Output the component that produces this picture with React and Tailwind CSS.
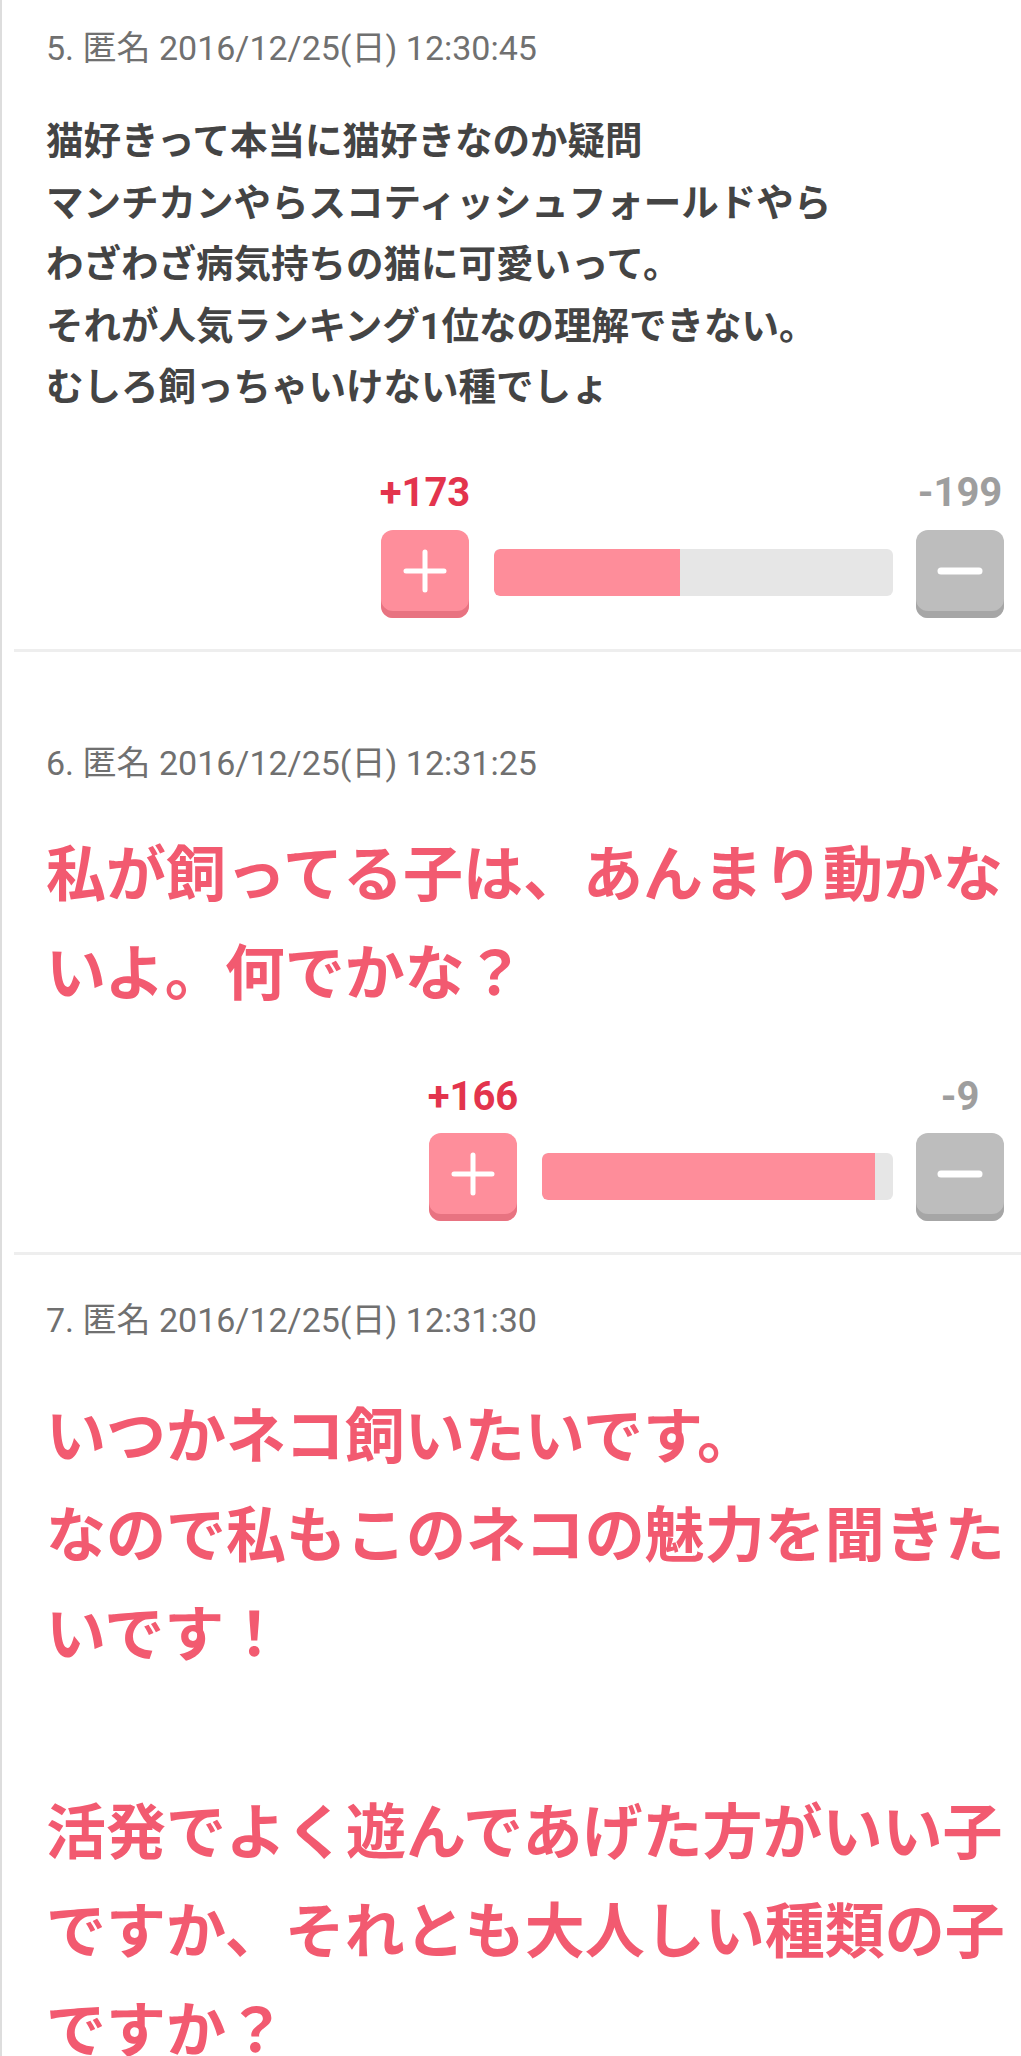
const FONT = "font-['Roboto','Noto_Sans_CJK_JP',sans-serif]";

function PlusIcon() {
  return (
    <svg width="46" height="46" viewBox="0 0 46 46">
      <path d="M23 4 V42 M4 23 H42" stroke="#ffffff" strokeWidth="5" strokeLinecap="round" fill="none" />
    </svg>
  );
}

function MinusIcon() {
  return (
    <svg width="46" height="46" viewBox="0 0 46 46">
      <path d="M4 23 H42" stroke="#ffffff" strokeWidth="7" strokeLinecap="round" fill="none" />
    </svg>
  );
}

function Votes({ plus, minus, barWidth, ratio, topGap }) {
  return (
    <div className="flex justify-end items-end pr-[17px]">
      <div className="flex flex-col items-center w-[88px]">
        <div className="h-[48px] leading-[48px] text-[40px] font-bold text-[#e3344d] whitespace-nowrap">{plus}</div>
        <div
          className={`w-[88px] h-[88px] rounded-[12px] bg-[#fe8e9b] shadow-[inset_0_-7px_0_#e87381] flex items-center justify-center pb-[6px] ${topGap}`}
        >
          <PlusIcon />
        </div>
      </div>
      <div className="h-[88px] flex items-center ml-[25px] mr-[23px] pb-[2px]">
        <div className="h-[47px] rounded-[6px] bg-[#e6e6e6] overflow-hidden flex" style={{ width: barWidth }}>
          <div className="h-full bg-[#fe8d9a] rounded-l-[6px]" style={{ width: `${ratio * 100}%` }} />
        </div>
      </div>
      <div className="flex flex-col items-center w-[88px]">
        <div className="h-[48px] leading-[48px] text-[40px] font-bold text-[#9e9e9e] whitespace-nowrap">{minus}</div>
        <div
          className={`w-[88px] h-[88px] rounded-[12px] bg-[#bdbdbd] shadow-[inset_0_-7px_0_#a6a6a6] flex items-center justify-center pb-[6px] ${topGap}`}
        >
          <MinusIcon />
        </div>
      </div>
    </div>
  );
}

function Header({ children, className }) {
  return (
    <div className={`h-[48px] leading-[48px] text-[34px] text-[#707070] pl-[44px] whitespace-nowrap ${className}`}>
      {children}
    </div>
  );
}

function Separator({ className }) {
  return <div className={`h-[3px] bg-[#eeeeee] ml-[12px] ${className}`} />;
}

export default function App() {
  return (
    <div className={`w-[1021px] h-[2056px] bg-white border-l-2 border-[#dddddd] overflow-hidden ${FONT}`}>
      {/* Comment 5 */}
      <div className="pt-[24px]">
        <Header>5. 匿名 2016/12/25(日) 12:30:45</Header>
        <div className="mt-[39px] pl-[44px] text-[37.5px] leading-[61.5px] font-bold text-[#444444]">
          猫好きって本当に猫好きなのか疑問
          <br />
          マンチカンやらスコティッシュフォールドやら
          <br />
          わざわざ病気持ちの猫に可愛いって。
          <br />
          それが人気ランキング1位なの理解できない。
          <br />
          むしろ飼っちゃいけない種でしょ
        </div>
        <div className="mt-[50px]">
          <Votes plus="+173" minus="-199" barWidth={399} ratio={173 / 372} topGap="mt-[13px]" />
        </div>
        <Separator className="mt-[31px]" />
      </div>

      {/* Comment 6 */}
      <div>
        <Header className="mt-[87px]">6. 匿名 2016/12/25(日) 12:31:25</Header>
        <div className="mt-[39px] pl-[44px] text-[60px] leading-[99px] font-bold text-[#f25a70]">
          私が飼ってる子は、あんまり動かないよ。何でかな？
        </div>
        <div className="mt-[49.5px]">
          <Votes plus="+166" minus="-9" barWidth={351} ratio={166 / 175} topGap="mt-[12px]" />
        </div>
        <Separator className="mt-[31px]" />
      </div>

      {/* Comment 7 */}
      <div>
        <Header className="mt-[41px]">7. 匿名 2016/12/25(日) 12:31:30</Header>
        <div className="mt-[43.5px] pl-[44px] text-[60px] leading-[99px] font-bold text-[#f25a70]">
          いつかネコ飼いたいです。
          <br />
          なので私もこのネコの魅力を聞きたいです！
          <br />
          <br />
          活発でよく遊んであげた方がいい子ですか、それとも大人しい種類の子ですか？
        </div>
      </div>
    </div>
  );
}
